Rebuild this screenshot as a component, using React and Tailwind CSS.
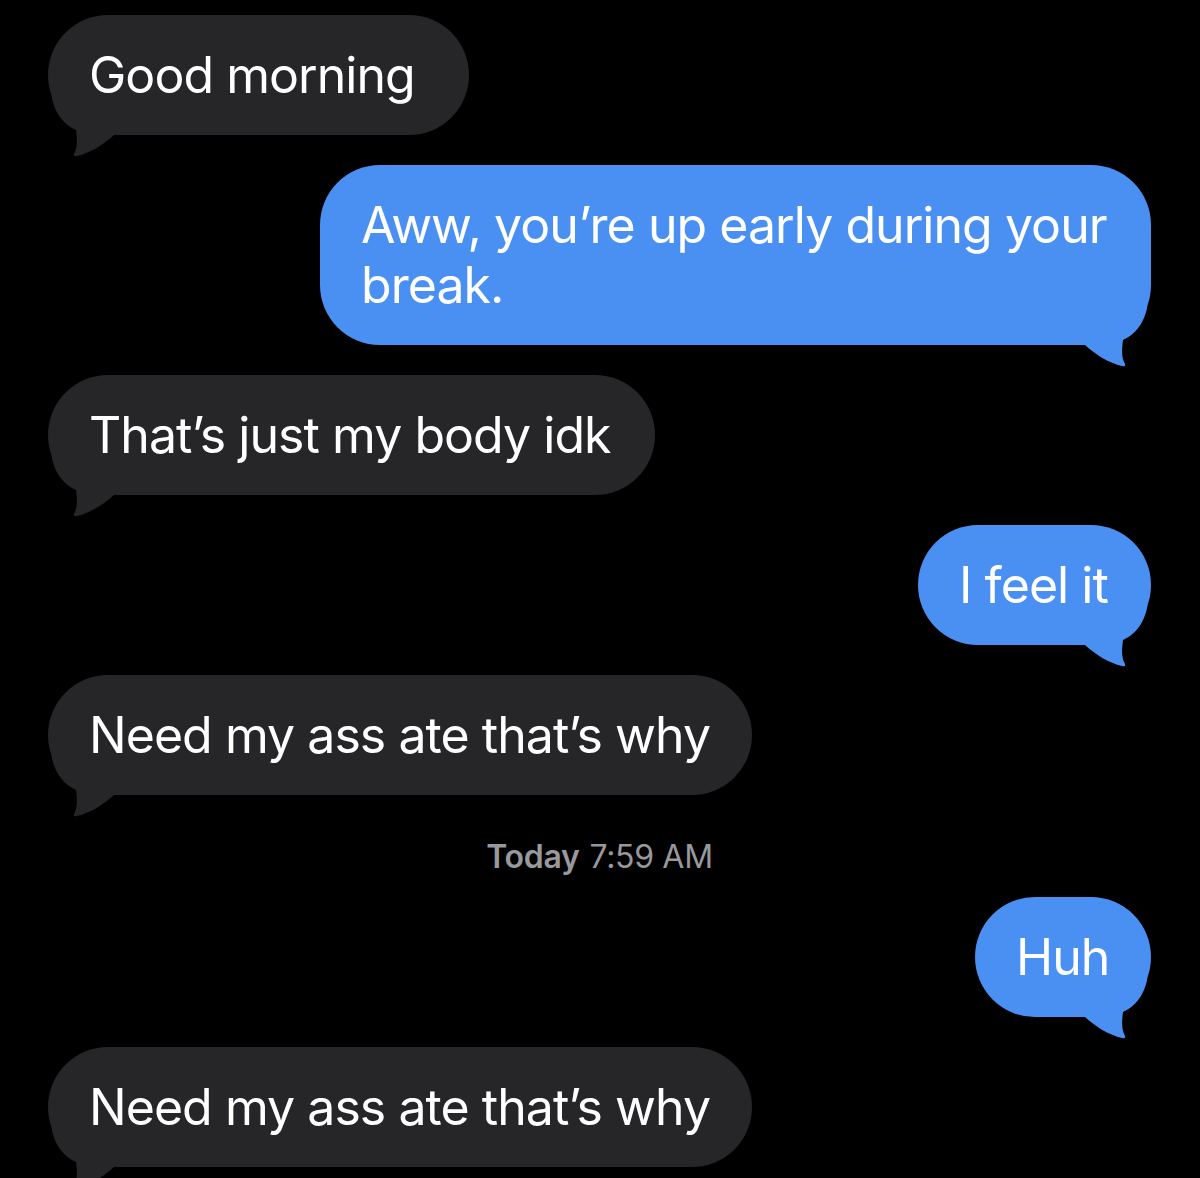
import React from 'react';

const messages = [
  { id: 1, from: 'them', text: 'Good morning', width: 'w-[421px]' },
  { id: 2, from: 'me', text: 'Aww, you’re up early during your break.', width: 'w-[831px]', wrap: true },
  { id: 3, from: 'them', text: 'That’s just my body idk', width: 'w-[607px]' },
  { id: 4, from: 'me', text: 'I feel it', width: 'w-[233px]' },
  { id: 5, from: 'them', text: 'Need my ass ate that’s why', width: 'w-[704px]' },
  { id: 'stamp' },
  { id: 6, from: 'me', text: 'Huh', width: 'w-[176px]' },
  { id: 7, from: 'them', text: 'Need my ass ate that’s why', width: 'w-[704px]' },
];

// little curled tail under the bubble, drawn for the left side and flipped for the right
const Tail = ({ mine }) => (
  <svg
    width="70"
    height="64"
    viewBox="0 -40 70 64"
    className={
      mine
        ? 'absolute right-0 bottom-[-24px] -scale-x-100 fill-[#4a90f2]'
        : 'absolute left-0 bottom-[-24px] fill-[#262629]'
    }
  >
    <path d="M3.5 -40 C5 -28 12 -12 28 -5 C29 3 30 12 26 19 Q25 22 29 21 C42 18 55 10 66 0 L66 -40 Z" />
  </svg>
);

const Bubble = ({ msg }) => {
  const mine = msg.from === 'me';
  return (
    <div className={mine ? 'flex justify-end' : 'flex justify-start'}>
      <div
        className={
          'relative py-[30px] pl-[41px] pr-[20px] rounded-[60px] text-white text-[50px] leading-[60px] tracking-[-0.019em] ' +
          msg.width +
          (msg.wrap ? '' : ' whitespace-nowrap') +
          (mine ? ' bg-[#4a90f2]' : ' bg-[#262629]')
        }
      >
        <Tail mine={mine} />
        <p className="relative">{msg.text}</p>
      </div>
    </div>
  );
};

export default function App() {
  return (
    <div
      className="w-[1200px] h-[1178px] overflow-hidden bg-black pt-[15px] pl-[48px] pr-[49px] flex flex-col gap-[30px]"
      style={{ fontFamily: 'Inter, "Noto Sans", sans-serif' }}
    >
      {messages.map((msg) =>
        msg.id === 'stamp' ? (
          <div
            key="stamp"
            className="mt-[12px] -mb-[10px] h-[40px] flex items-center justify-center text-[32px] leading-[40px] text-[#98989d] tracking-[-0.01em]"
          >
            <span className="font-semibold">Today</span>
            <span className="ml-[10px]">7:59 AM</span>
          </div>
        ) : (
          <Bubble key={msg.id} msg={msg} />
        )
      )}
    </div>
  );
}
